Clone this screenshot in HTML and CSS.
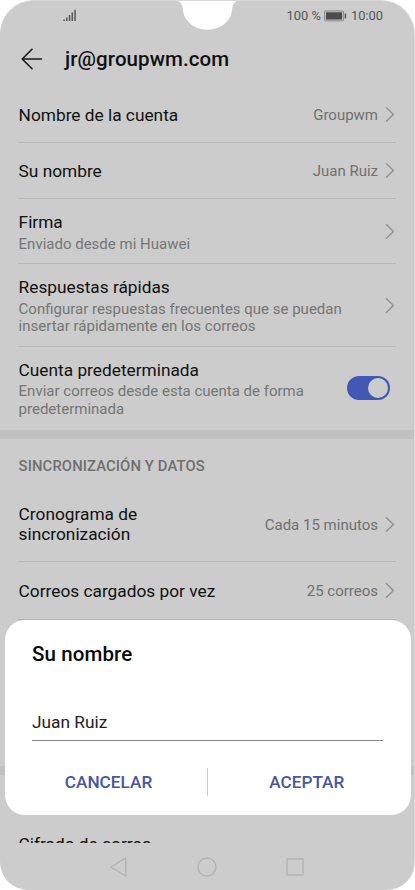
FILE: index.html
```html
<!DOCTYPE html>
<html lang="es">
<head>
<meta charset="utf-8">
<title>jr@groupwm.com</title>
<link rel="stylesheet" href="styles.css">
</head>
<body>
<svg class="defs" width="0" height="0"><symbol id="chev" viewBox="0 0 10 17"><path d="M1 1.2 8.4 8.5 1 15.8" fill="none" stroke="#929292" stroke-width="1.4"/></symbol></svg>
<div class="phone">
  <svg class="notch" width="67" height="31" viewBox="0 0 67 31"><path d="M1 0C6 .8 8.500 4 9 10C10 21 20 29.700 33.500 29.700S57 21 58 10C58.500 4 61 .8 66 0Z" fill="#fff"/></svg>
  <div class="status">
    <svg width="14" height="13" viewBox="0 0 14 13" fill="#555"><path d="M.3 10.500h1.600V12H.3zM3 8.500h1.500V12H3zM5.800 6h1.500v6H5.800zM8.500 3.500H10V12H8.500zM11.300.8h1.500V12h-1.500z"/></svg>
    <div class="power"><span class="pct">100 %</span>
    <svg width="23" height="12" viewBox="0 0 23 12"><rect x=".5" y=".9" width="19" height="10" rx="1" fill="#bbb" stroke="#888" stroke-width=".9"/><rect x="2" y="2.300" width="16" height="7.200" fill="#4c4c4c"/><rect x="20.700" y="3.500" width="1.400" height="5" fill="#555"/></svg>
    <span class="clock">10:00</span></div>
  </div>
  <header class="bar">
    <svg width="22" height="22" viewBox="0 0 22 22" fill="none" stroke="#1b1b1b" stroke-width="1.600" stroke-linecap="round" stroke-linejoin="round"><path d="M11 1.200 1.200 11 11 20.800M1.200 11H20.500"/></svg>
    <h1>jr@groupwm.com</h1>
  </header>
  <main class="list">
    <div class="row"><div class="label">Nombre de la cuenta</div><span class="value">Groupwm</span><svg class="chev"><use href="#chev"/></svg></div>
    <div class="row"><div class="label">Su nombre</div><span class="value">Juan Ruiz</span><svg class="chev"><use href="#chev"/></svg></div>
    <div class="row two"><div class="label">Firma<p>Enviado desde mi Huawei</p></div><svg class="chev"><use href="#chev"/></svg></div>
    <div class="row three"><div class="label">Respuestas rápidas<p>Configurar respuestas frecuentes que se puedan<br>insertar rápidamente en los correos</p></div><svg class="chev"><use href="#chev"/></svg></div>
    <div class="row three last"><div class="label">Cuenta predeterminada<p>Enviar correos desde esta cuenta de forma<br>predeterminada</p></div><div class="switch"><i></i></div></div>
    <div class="band"></div>
    <h2>SINCRONIZACIÓN Y DATOS</h2>
    <div class="row sync"><div class="label">Cronograma de<br>sincronización</div><span class="value">Cada 15 minutos</span><svg class="chev"><use href="#chev"/></svg></div>
    <div class="row load"><div class="label">Correos cargados por vez</div><span class="value">25 correos</span><svg class="chev"><use href="#chev"/></svg></div>
    <div class="gap"></div>
    <div class="band"></div>
    <div class="row cipher"><div class="label">Cifrado de correo</div></div>
  </main>
  <nav class="nav">
    <svg width="200" height="24" viewBox="0 0 200 24" fill="none" stroke="#b2b2b2" stroke-width="1.300" stroke-linejoin="round"><path d="M3.500 12 18.800 3v18z"/><circle cx="100" cy="12" r="9"/><rect x="180" y="4" width="16" height="16" rx=".6"/></svg>
  </nav>
  <section class="dialog">
    <h3>Su nombre</h3>
    <div class="field">Juan Ruiz</div>
    <div class="actions"><button>CANCELAR</button><button>ACEPTAR</button></div>
  </section>
</div>
</body>
</html>
```
FILE: styles.css
```css
* { box-sizing: border-box; }
body { margin: 0; background: #fff; font-family: Roboto, "Liberation Sans", sans-serif; color: #111; }
h1, h2, h3, p { margin: 0; }
.defs { position: absolute; }
.phone { position: relative; display: flex; flex-direction: column; width: 415px; height: 890px; background: #ccc; border: 1px solid #d8d8d8; border-width: 1px 1px 0 0; border-radius: 34px 34px 28px 28px; overflow: hidden; }
.notch { position: absolute; left: 174px; top: -1px; }
.status { display: flex; height: 30px; padding: 0 31px 0 63px; justify-content: space-between; align-items: center; font-size: 12.9px; color: #555; }
.status > svg { margin-top: -2px; }
.power { display: flex; align-items: center; margin-top: -1px; }
.power svg { margin: 0 4px 0 3px; }
.bar { display: flex; align-items: center; height: 56px; padding-left: 21px; gap: 22px; }
h1 { font-size: 20.5px; font-weight: 500; line-height: 24px; letter-spacing: .1px; }
.list { height: 756px; overflow: hidden; }
.row { display: flex; align-items: center; height: 56px; margin: 0 18px 0 18px; border-bottom: 1px solid #b8b8b8; }
.two { height: 65px; }
.three { height: 83px; }
.last { border-bottom: 0; }
.label { flex: 1; padding: 2px 0 0 .6px; font-size: 17.3px; line-height: 20.5px; white-space: nowrap; }
.label p { font-size: 15px; line-height: 17.7px; color: #757575; margin-top: 3px; }
.two .label { padding-top: 4px; }
.three .label { padding-top: 3px; }
.last .label { padding-top: 1.500px; }
.sync .label { padding-top: 0; }
.value { font-size: 15px; color: #707070; margin: 1px 7px 0 0; }
.chev { width: 10px; height: 17px; margin-right: 1px; }
.switch { width: 43px; height: 24px; margin: -2px 6px 0 0; border-radius: 12px; background: #4357b5; padding: 2px; display: flex; justify-content: flex-end; }
.switch i { width: 20px; height: 20px; border-radius: 50%; background: #ccc; }
.band { height: 9px; background: #c1c1c1; }
h2 { height: 48px; padding: 18px 18px 0 18.6px; font-size: 14.8px; font-weight: 500; line-height: 18px; letter-spacing: .12px; color: #6f6f6f; }
.sync { height: 75px; }
.load { height: 58px; }
.gap { height: 146px; }
.cipher { height: 136px; border: 0; }
.nav { display: flex; justify-content: center; align-items: center; height: 47px; }
.dialog { position: absolute; left: 5px; top: 619px; width: 405.500px; height: 194.500px; padding: 22px 28px 0; border-radius: 20px; background: #fff; }
h3 { margin-left: -1px; font-size: 20.500px; font-weight: 500; line-height: 24px; letter-spacing: .1px; color: #080808; }
.field { height: 51px; margin: 24px 0 0 -1px; padding-top: 22px; border-bottom: 1px solid #888; font-size: 17.300px; line-height: 20px; color: #222; }
.actions { display: grid; grid-template-columns: 175px 1fr; height: 28px; margin-top: 27px; }
button { border: 0; background: none; padding: 0; font: 500 17.200px/28px Roboto, sans-serif; color: #4656a0; }
button:first-child { border-right: 1px solid #ccc; padding-right: 23px; }
button:last-child { padding-left: 23px; }
```
